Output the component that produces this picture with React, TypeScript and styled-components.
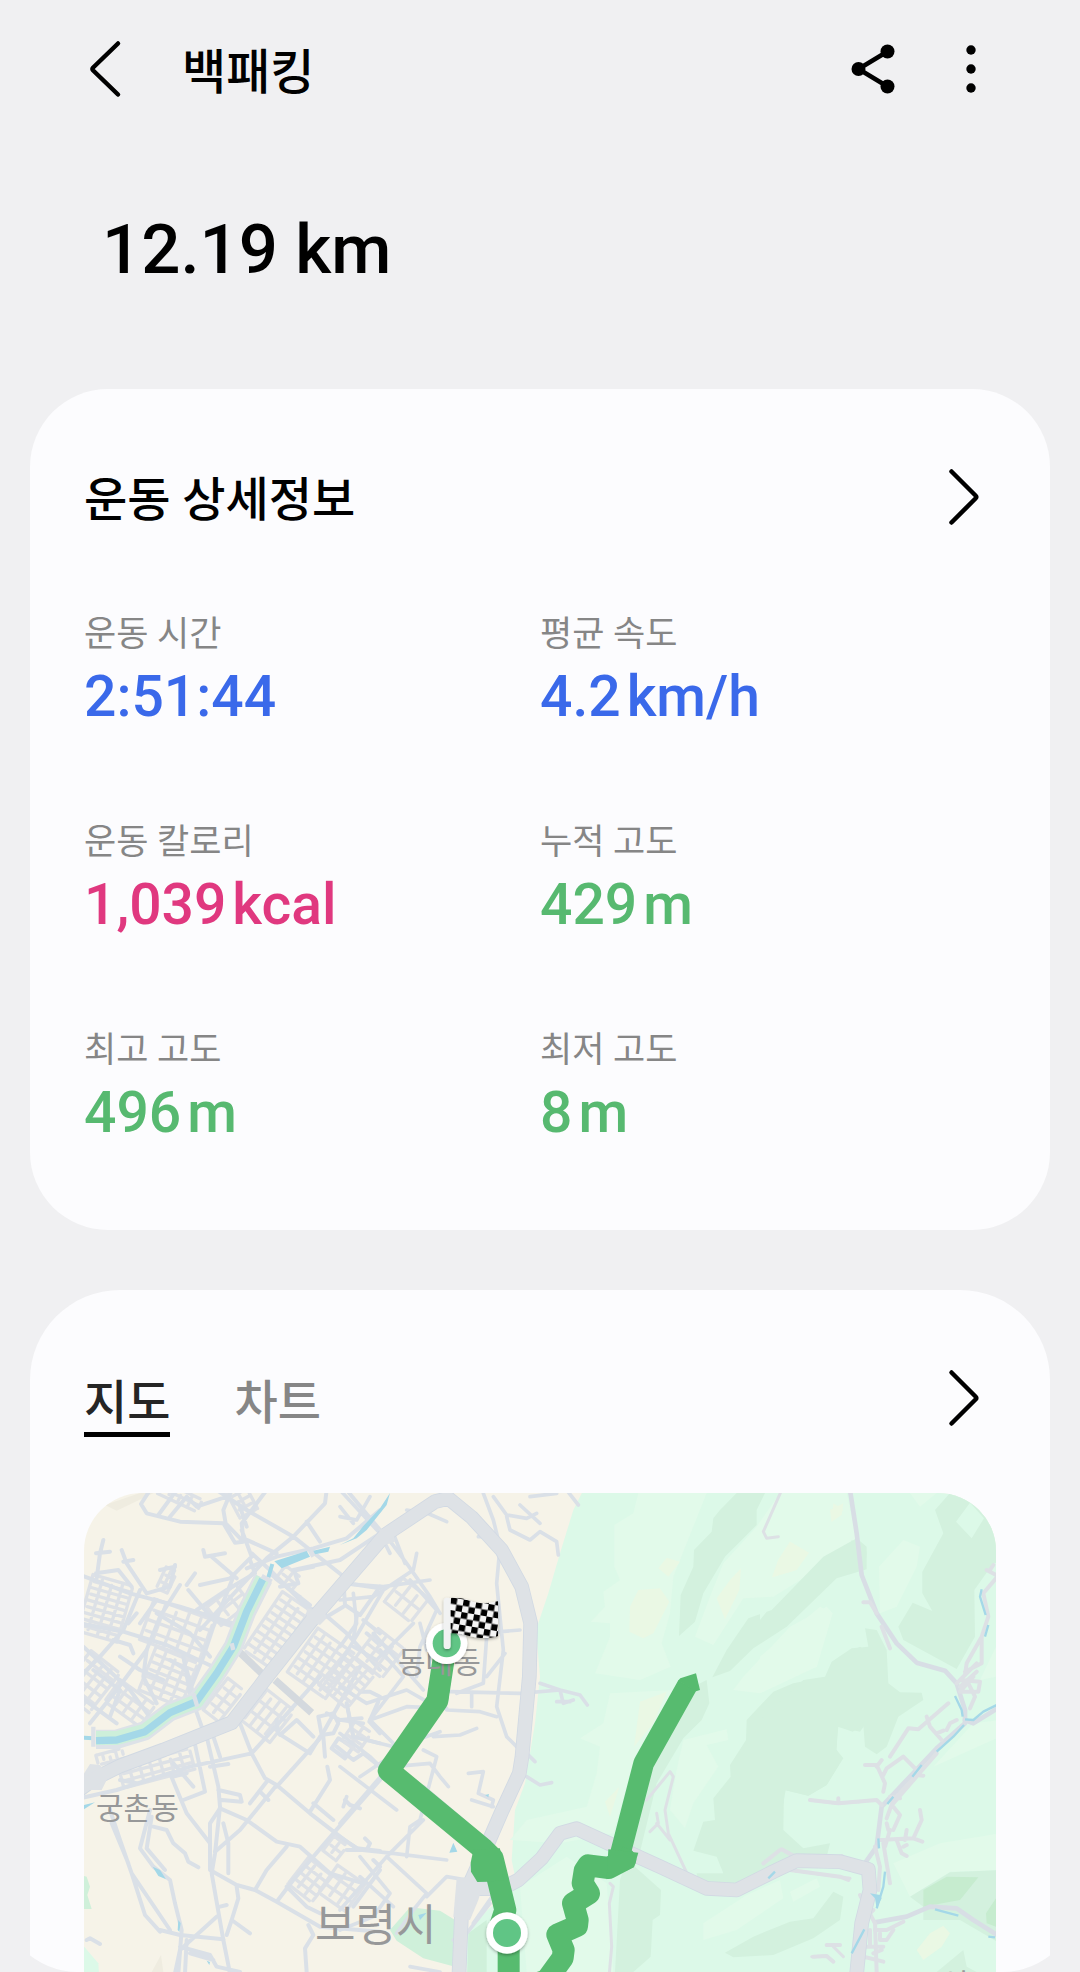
import React, { useState } from "react";
import styled, { createGlobalStyle } from "styled-components";

const GlobalStyle = createGlobalStyle`
  * { box-sizing: border-box; }
  body {
    margin: 0;
    background: #f0f0f2;
    color: #000;
    font-family: Roboto, "Noto Sans CJK KR", sans-serif;
  }
  h1, h2, p, dl, dt, dd { margin: 0; }
  button { font: inherit; }
`;

const Screen = styled.div`
  display: flex;
  flex-direction: column;
  height: 100vh;
  overflow: hidden;
  border-radius: 0 0 78px 78px;
`;

const Toolbar = styled.header`
  display: flex;
  align-items: center;
  flex: none;
  padding: 36px 84px;
`;

const IconButton = styled.button`
  display: flex;
  flex: none;
  padding: 0;
  border: 0;
  background: none;
  color: #000;
  cursor: pointer;
`;

const ScreenTitle = styled.h1`
  flex: 1;
  margin-left: 50px;
  padding-top: 8px;
  font-size: 48px;
  font-weight: 500;
  line-height: 58px;
`;

const Actions = styled.div`
  display: flex;
  gap: 48px;
`;

const Content = styled.main`
  flex: 1;
  min-height: 0;
  overflow-y: auto;
  scrollbar-width: none;
  padding: 0 30px;
`;

const Distance = styled.p`
  padding: 70px 72px 97px;
  font-size: 69px;
  font-weight: 500;
  line-height: 84px;
`;

const Card = styled.section<{ $radius: number }>`
  margin-bottom: 60px;
  padding: 78px 54px 83px;
  border-radius: ${(p) => p.$radius}px;
  background: #fcfcfe;
`;

const CardHeader = styled.div<{ $space: number }>`
  display: flex;
  align-items: flex-start;
  justify-content: space-between;
  margin-bottom: ${(p) => p.$space}px;
`;

const CardTitle = styled.h2`
  padding-top: 6px;
  font-size: 47px;
  font-weight: 500;
  line-height: 54px;
`;

const Stats = styled.dl`
  display: grid;
  grid-template-columns: 1fr 1fr;
  row-gap: 87px;
`;

const StatLabel = styled.dt`
  margin-bottom: 7px;
  padding-top: 4px;
  color: #868686;
  font-size: 35px;
  line-height: 42px;
`;

const StatValue = styled.dd<{ $color: string }>`
  display: flex;
  gap: 6px;
  color: ${(p) => p.$color};
  font-size: 57px;
  font-weight: 500;
  line-height: 68px;
`;

const Tabs = styled.div`
  display: flex;
  gap: 64px;
`;

const Tab = styled.button<{ $active: boolean }>`
  padding: 6px 0 0;
  border: 0;
  border-bottom: 5px solid ${(p) => (p.$active ? "#000" : "transparent")};
  background: none;
  color: ${(p) => (p.$active ? "#252525" : "#868686")};
  font-size: 47px;
  font-weight: 500;
  line-height: 58px;
  cursor: pointer;
`;

const MapFrame = styled.div`
  position: relative;
  height: 600px;
  overflow: hidden;
  border-radius: 58px;
  background: #f6f3e8;
`;

const MapLayer = styled.svg`
  position: absolute;
  top: 0;
  left: 0;
  width: 912px;
  min-width: 100%;
  height: 600px;
`;

const Place = styled.span<{ $x: number; $y: number; $large?: boolean }>`
  position: absolute;
  left: ${(p) => p.$x}px;
  top: ${(p) => p.$y}px;
  color: #979899;
  font-size: ${(p) => (p.$large ? 44 : 30)}px;
  line-height: ${(p) => (p.$large ? 60 : 44)}px;
  white-space: nowrap;
`;

const Chevron = ({ back = false }: { back?: boolean }) => (
  <svg width="48" height="60" viewBox="0 0 48 60" fill="none" aria-hidden="true">
    <path
      d={back ? "M34 4.5 9.2 28.5Q7.8 30 9.2 31.5L34 55.5" : "M3.5 4.5 27.500 28.500Q29 30 27.500 31.500L3.500 55.500"}
      stroke="currentColor"
      strokeWidth="4.5"
      strokeLinecap="round"
      strokeLinejoin="round"
    />
  </svg>
);

const ShareIcon = () => (
  <svg width="50" height="66" viewBox="0 0 50 66" aria-hidden="true">
    <path d="M39.500 15.500 10.500 33 39.500 50.500" fill="none" stroke="currentColor" strokeWidth="4.600" />
    <circle cx="10.500" cy="33" r="7" />
    <circle cx="39.500" cy="15.500" r="7" />
    <circle cx="39.500" cy="50.500" r="7" />
  </svg>
);

const MoreIcon = () => (
  <svg width="50" height="66" viewBox="0 0 50 66" aria-hidden="true">
    <circle cx="25" cy="14" r="4.700" />
    <circle cx="25" cy="33" r="4.700" />
    <circle cx="25" cy="52" r="4.700" />
  </svg>
);

type BlockProps = { x: number; y: number; w: number; h: number; angle: number; cols: number; rows: number; s?: number };

/* A rotated grid of side streets around the centre (x, y). */
const Blocks = ({ x, y, w, h, angle, cols, rows, s = 10 }: BlockProps) => {
  let d = "";
  for (let i = 0; i <= cols; i++) {
    const px = -w / 2 + (w * i) / cols;
    const trim = (i % 3) * 8;
    d += `M${px} ${-h / 2 + trim}V${h / 2 - ((i + 1) % 3) * 6}`;
  }
  for (let j = 0; j <= rows; j++) {
    const py = -h / 2 + (h * j) / rows;
    d += `M${-w / 2 + (j % 2) * 10} ${py}H${w / 2 - ((j + 1) % 2) * 8}`;
  }
  return <path d={d} transform={`translate(${x} ${y}) rotate(${angle})`} strokeWidth={s} />;
};

const West = "translate(-12 -9)";
const Centre = "translate(768 -9)";
const Hills = "translate(1428 -9)";
const East = "translate(2028 -9)";

const Terrain = () => (
  <g>
    <g transform={Centre}>
      <path fill="#dcf9e8" d="M730 0 700 60 660 190 625 310 588 420 600 560 585 700 555 880 525 960 515 1110 530 1185 440 1262 380 1330V1900H2100V0Z" />
      <path fill="#cff0da" d="M150 1320 210 1252 300 1262 345 1290V1430L250 1405 170 1352ZM385 1330 440 1290V1500H380Z" />
    </g>
    <g transform={West}>
      <path fill="#efece0" d="M75 45 180 9 240 0 110 62ZM215 1446 243 1395 250 1446Z" />
      <path fill="#cff0da" d="M0 1155 20 1160 30 1190 22 1215 35 1257H0Z" />
      <path fill="#dcf9e8" d="M0 1355 55 1420 60 1500H0Z" />
    </g>
    <g transform={Hills}>
      <g fill="#e2faea">
        <path d="M235 9H440L380 160 340 260 330 370 305 460 332 530 240 570 105 550 150 440 150 400 92 395 135 350 130 305 180 270 163 230V105L220 70Z" />
        <path d="M660 9H860L890 150 770 240 640 320 550 325 460 465 405 440 450 320 490 220 590 110Z" />
        <path d="M520 600 550 560 690 410 800 350 818 370 770 530 600 610Z" />
        <path d="M150 610 340 600 225 800 160 1030 0 1060-150 1050 -100 990 80 950 110 850 120 770 60 745 130 700Z" />
        <path d="M370 750 500 718 505 750 440 765 475 830 400 940 375 1015 330 960 350 840Z" />
        <path d="M430 1300 560 1215 660 1170 670 1225 530 1320 430 1350ZM690 1205 770 1165 780 1190 700 1235ZM-120 1190 20 1100 140 1180 160 1446H-100Z" />
      </g>
      <g fill="#eaf8e4">
        <path d="M235 300 300 295 328 335 280 430 250 445 208 425 210 350ZM295 235 320 203 360 215 325 260ZM510 270 543 235 538 300 495 388 470 325ZM690 155 747 188 710 240 637 262 655 210ZM240 635 320 605 280 700 222 770ZM135 935 178 890 150 980ZM820 40 850 60 815 95Z" />
      </g>
      <g fill="#d3f1de">
        <path d="M480 60 530 9H615L590 60V105L495 200 430 310 405 395 357 438 362 315 400 230 402 180 455 125 460 85Z" />
        <path d="M890 145 790 200 635 360 565 385 500 480 457 562 510 543 580 475 680 410 830 265 920 238V170Z" />
        <path d="M900 470 820 515 800 560 700 580 640 605 560 690 558 750 510 825 512 860 460 925 465 990 430 995 400 1082 470 1100 490 1150 410 1150 420 1210 600 1170 700 1100 800 1100 810 1060 730 1075 670 1020 672 900 745 917 800 885 850 805 830 780 833 710 900 725 960 640 960 520Z" />
        <path d="M440 570 448 640 425 690 370 745 290 880 240 1085 225 1130 303 1200 300 1275 278 1290 272 1400 220 1446H165L180 1170 215 1060 275 790 400 590ZM495 1388 580 1340 690 1295 760 1285 820 1205 850 1220 840 1290 760 1345 640 1395 520 1402Z" />
      </g>
    </g>
    <g transform={East}>
      <g fill="#e2faea">
        <path d="M430 150 480 170 470 230 410 350 360 370 357 230ZM0 500 180 350 217 370 170 530 0 600ZM450 9H530L480 50ZM708 470 660 570 708 560ZM640 700 720 690V740L520 830ZM400 1120 540 1060 720 1030V1140L570 1145 450 1220Z" />
      </g>
      <g fill="#d3f1de">
        <path d="M570 9 525 60 550 130 487 245V310L517 363 458 338 415 410 430 450 590 537 645 440 643 300 700 220 720 215V0Z" />
        <path d="M275 150 320 185 315 240 260 240ZM315 415 350 420 380 480 385 580 420 607 485 608 490 630 415 680 380 770 350 793 315 770 310 705 278 725 235 710 228 780 248 805 200 885 145 917 77 900 60 1000 0 1040V690L130 570 195 560 215 515 275 475 325 470ZM450 1220 570 1147 720 1140V1360L600 1290H490V1250ZM530 1446 610 1380 620 1430 650 1446Z" />
      </g>
      <path fill="#c6eccf" d="M490 1200 560 1160 655 1162 600 1230 490 1250ZM678 1270 708 1225V1310L680 1300Z" />
      <path fill="#dcf9e8" d="M588 95 630 38 672 85 635 145ZM0 370 20 365 0 390Z" />
      <path fill="#eaf8e4" d="M90 155 145 188 108 240 36 262 55 210ZM510 1330 550 1307 570 1330 545 1370 490 1410 470 1380ZM210 60 250 40 245 75 215 95Z" />
    </g>
  </g>
);

const Streets = () => (
  <g fill="none" stroke="#dae0e7" strokeLinecap="round" strokeLinejoin="round">
    <g transform={West}>
      <g stroke="#dde1e6">
        <Blocks x={75} y={355} w={125} h={175} angle={16} cols={4} rows={9} />
        <Blocks x={30} y={575} w={110} h={150} angle={38} cols={4} rows={5} />
        <Blocks x={290} y={420} w={190} h={130} angle={20} cols={5} rows={4} />
        <Blocks x={265} y={560} w={135} h={140} angle={22} cols={4} rows={6} />
        <Blocks x={150} y={640} w={130} h={80} angle={36} cols={4} rows={3} />
        <Blocks x={590} y={420} w={100} h={210} angle={34} cols={3} rows={9} />
        <Blocks x={725} y={520} w={140} h={160} angle={35} cols={5} rows={6} />
        <Blocks x={555} y={670} w={130} h={120} angle={38} cols={5} rows={3} />
        <Blocks x={430} y={630} w={60} h={120} angle={38} cols={2} rows={4} />
        <Blocks x={230} y={835} w={220} h={64} angle={-15} cols={7} rows={3} />
        <Blocks x={90} y={800} w={80} h={30} angle={-15} cols={4} rows={1} />
        <Blocks x={690} y={1170} w={90} h={100} angle={38} cols={3} rows={4} />
        <Blocks x={785} y={1195} w={100} h={100} angle={35} cols={3} rows={3} />
        <Blocks x={765} y={1075} w={50} h={55} angle={38} cols={2} rows={2} />
        <Blocks x={260} y={270} w={36} h={70} angle={25} cols={2} rows={3} />
        <Blocks x={445} y={345} w={110} h={70} angle={-38} cols={3} rows={2} />
        <Blocks x={625} y={265} w={60} h={50} angle={38} cols={2} rows={2} />
        <Blocks x={485} y={30} w={60} h={90} angle={-28} cols={2} rows={4} />
        <Blocks x={300} y={20} w={130} h={40} angle={25} cols={4} rows={2} />
      </g>
      <g strokeWidth="12">
        <path d="M210 0 183 42 200 70 300 95 430 100 465 158 490 155 437 100 430 60 455 0M235 75 290 0M270 80 320 20 350 50 440 20M410 0 500 60 640 140 785 255M560 0 485 100 490 145 590 190M740 0 735 40 640 140 560 205 360 420M480 50 500 110M680 95 720 155M800 0 900 120M485 120 515 200 450 265 360 285M515 190 570 240 690 360" />
        <path d="M0 255 150 310 300 350 460 400M0 400 130 425 260 465 420 540M10 470 150 600 230 710M300 285 240 380 200 480 110 600 30 700M180 300 130 420 60 500 0 560M230 370 330 430 390 500M50 265 60 190 70 150M48 190 90 185M48 250 115 240 155 290M125 180 140 220 200 310M130 215 160 210M240 240 285 230M285 225 270 290 200 310M325 300 400 390 460 410M345 250 320 285M370 180 375 200 435 190M395 200 470 265M460 260 400 410 370 500 330 600M510 210 525 250 440 300 350 360" />
        <path d="M310 500 330 610 365 710M100 450 150 465 160 490M270 510 320 540 345 630M120 500 180 540 250 570M200 480 190 560 230 640M0 620 110 700M40 540 120 600 90 680M170 370 145 400M230 330 180 400" />
        <path d="M480 700 515 790 555 865 590 885 690 970 800 1055 830 1075 900 1083M515 790 330 830 110 900 0 925M515 790 560 740 640 650 720 560M590 890 720 745 840 530M340 740 375 905 310 930M380 740 415 890 420 950 405 1090 395 1150 430 1350 450 1450M400 740 420 800M270 850 320 970 390 1060M390 830 445 822M415 900 480 915 485 935 425 930M510 940 560 875M540 905 565 930M280 820 340 890M120 870 170 880M320 850 280 860" />
        <path d="M420 955 500 990 590 1055 660 1070 750 1150 850 1180M420 955 390 1000V1140L470 1185 525 1200 590 1235 720 1310 900 1325M590 885 480 1020 405 1085M430 1000 445 1060V1150M620 1070 560 1140 525 1200M590 1235 640 1170 760 1030 900 870M690 965 750 870 742 830M700 940 760 990M620 1190 680 1250 720 1270M820 1250 900 1140M470 1190 475 1225 455 1290 510 1330M455 1290 440 1335M420 1250 440 1245M410 1280 300 1380 285 1450M240 1320 300 1335 430 1348M795 930 810 945 840 955M855 1045 870 1060 860 1080 800 1080M880 1110 900 1130" />
        <path d="M90 960 120 1050 155 1150 195 1275 240 1325M155 1150 270 1320M95 1000 145 1120M210 960 180 1075 220 1130 270 1170 285 1240 305 1320 295 1450M215 980 200 1075 255 1140M220 1010 260 1020 280 1060 315 1090 325 1115 355 1132M300 1370 390 1395 410 1430 480 1446M320 1350 315 1450M330 1390 400 1410M20 1350 30 1345 60 1362M685 1305 700 1335 675 1375 680 1446M730 740 735 800M740 670 780 690 845 685M800 640 820 740 900 760M840 605 870 605 900 620M895 635 868 695 900 730M715 680 760 670 775 700 760 730 725 735ZM770 770 820 810 850 790 900 830M775 745 755 775 795 805 820 770ZM590 690 595 730 690 790 720 740M600 735 650 690 700 740" />
        <path d="M500 235 590 200 700 175 800 145 900 60M640 240 780 210 900 130M575 255 690 345M645 250 655 280 600 290M730 370 800 430 900 540M790 270 795 345 840 375 900 290M800 280 900 295M740 380 790 350M830 380 820 450M850 390 900 430M860 430 900 465M660 320 665 340 700 360M700 230 650 240" />
      </g>
      <path stroke="#d4d9de" strokeWidth="22" strokeLinecap="butt" d="M470 478 545 550M585 570 695 668" />
    </g>
    <g transform={Centre}>
      <g stroke="#dde1e6">
        <Blocks x={20} y={570} w={110} h={130} angle={40} cols={4} rows={6} />
        <Blocks x={120} y={490} w={100} h={110} angle={38} cols={3} rows={4} />
        <Blocks x={50} y={740} w={60} h={70} angle={35} cols={2} rows={3} />
        <Blocks x={200} y={330} w={100} h={90} angle={38} cols={3} rows={2} />
      </g>
      <g strokeWidth="11">
        <path d="M140 140 200 220 270 320 300 370M160 130 195 220M130 150 150 190M0 280 130 290 270 270M0 330 100 320 220 240 230 190M40 310 50 400 0 470M130 300 60 420 0 520M100 430 250 600M210 270 290 360 240 470 230 560M220 400 110 510 40 470M190 560 90 690 180 780 60 860M0 590 80 640 200 600 270 640M0 690 70 700M20 640 40 740 200 780M0 730 90 800 170 880M120 480 190 560M240 400 260 480" />
        <path d="M430 10 460 90 480 170 470 280 490 480 470 650 500 740 535 775M460 20 500 75 560 85 590 70M500 80 510 120 570 150 600 125 650 155 655 195M540 45 600 100M620 0 680 0 715 45M570 20 650 10M415 140 440 140M240 60 320 95M200 60 260 70M420 430 540 420M440 440 430 580 350 610M495 490 440 560M330 605 540 610 660 600 720 615 742 645M600 580 660 600 670 640 700 630M650 635H690M395 610V650M320 660 420 665 470 680M560 790 585 815M560 860 600 885 635 878M280 740 360 735 410 715M230 750 300 725M90 690 200 650 320 655" />
        <path d="M250 780 290 800 240 990 210 1010 200 1100M160 830 270 820 300 860 325 890M385 850 430 845 415 910 460 930 455 950M395 930 460 950M0 830 170 960M250 890 380 1000M0 1000 130 850M0 1040 60 1080 160 1090 320 1110M0 1260 140 1100 250 990M0 1320 100 1280 150 1210 60 1100M140 1100 260 1210 220 1260 170 1330M60 1160 160 1250M260 1220 320 1160 380 1170M400 1300 470 1200M380 1330 450 1240M210 1430 300 1446M340 1350 360 1370M10 950 20 920M0 80 50 90 90 20M0 0 120 130M40 100 0 50" />
      </g>
    </g>
    <g stroke="#dde1e5">
      <g transform={Hills} strokeWidth="9">
        <path d="M665 0 610 125 620 145 655 140M260 930 330 845 340 860 315 960 325 1030 390 1170M290 970 295 1000 270 1025M290 1000 330 1050M150 1180 160 1190 148 1240 155 1370 148 1450M750 930 830 940 900 935M665 1078 710 1100 850 1110M690 1140 760 1150 870 1165M800 1365H840M755 1400 800 1398 820 1415M820 1370 850 1400" />
      </g>
      <g transform={East} strokeWidth="12">
        <path strokeWidth="14" d="M270 0 290 130 305 255 350 370 410 460 470 518 555 542 590 580 615 660V700L530 775 365 950 350 1070 300 1140" stroke="#d8dee5" />
        <path stroke="#d8dee5" strokeWidth="14" d="M615 690 640 700 720 650M345 1297 440 1280 510 1250 590 1255 640 1290 720 1340" />
        <path d="M310 337H330L350 370M365 410 390 475M345 1070 360 1130 355 1200M370 1060 390 1180M300 1215 345 1300 350 1446M375 1070 390 1020M355 1050 460 1045 487 1055M440 1020 435 1050M460 1045 485 990 480 960M410 1050 425 1090 440 1098M430 1070 440 1065M150 930 235 940 350 930 365 945M235 925V940M315 825 350 825 375 880 370 905M365 810 350 830M370 855 380 835 430 800 470 840M390 800 445 715 475 718 565 640M500 680 510 710 545 750M530 730 550 722M560 720 570 700 590 690M490 857 470 855 400 930 380 985M420 925 390 920M400 950 420 975 400 1020M530 790 400 940M380 1000 385 1020" />
        <path d="M708 265 670 310 685 380 665 440 620 520 615 555 590 580M680 240 708 255M700 225 690 240M665 440V520L615 545M650 520 600 570 660 575 655 605 600 605 640 560M620 570 645 620 630 655M600 590 650 545M300 1300 340 1260M305 1260 310 1290M200 1365H240M160 1400 200 1398 220 1415M290 1395 370 1415M330 1320V1370M320 1370H370M345 1320H380L430 1295M360 1330V1350H380L400 1320M340 1390 365 1380" />
        <path d="M90 1140 240 1160 265 1170M65 1078 100 1098M245 1098 290 1140M10 1120 60 1080" />
      </g>
    </g>
  </g>
);

const highways = (
  <>
    <path d="M-10 905 45 865 120 828 250 780 455 698 560 562 700 385 915 135 1065 35 1105 25 1175 82 1265 180 1325 290 1352 400 1348 560 1326 800 1318 850 1265 965 1215 1080 1165 1190 1145 1260 1135 1500" />
    <path d="M1140 1196H1265L1315 1170 1385 1105 1440 1030 1490 1016 1590 1062 1740 1130 1880 1195 1970 1200 2080 1145 2150 1112 2280 1115 2365 1138 2370 1200 2345 1300 2325 1500" />
  </>
);

const Highways = () => (
  <g transform={West} fill="none" strokeLinejoin="round">
    <g stroke="#d1d9e3" strokeWidth="44">{highways}</g>
    <path d="M0 870 30 822 60 825 85 860 65 900H0ZM680 355 735 365 740 385 720 405 680 390ZM895 115 940 130 945 155 915 165Z" fill="#dee2e6" />
    <path d="M1130 1165 1180 1160 1210 1180 1195 1230 1170 1290 1120 1280Z" fill="#dee2e6" />
    <g stroke="#dee2e6" strokeWidth="39">{highways}</g>
  </g>
);

const Water = () => (
  <g fill="none" strokeLinejoin="round">
    <g transform={West}>
      <path d="M550 265 500 365 460 470 410 550 350 634 270 665 195 722 110 748 48 748" stroke="#dde2e8" strokeWidth="58" />
      <path d="M548 265 500 365 460 470 410 550 350 634 270 665 195 722 110 744 48 744" stroke="#cdefda" strokeWidth="42" />
      <path d="M548 268 500 365 460 470 410 550 350 634 270 668 195 725 110 750 48 752" stroke="#a4d8e8" strokeWidth="22" />
      <path d="M0 742 40 745M565 262 577 222" stroke="#a4d8e8" strokeWidth="12" />
      <path d="M583 214 680 183 690 200 605 235ZM700 182 750 170 745 185 705 193ZM780 165 820 145 850 108 900 55 930 9 920 45 860 120 830 145Z" fill="#a4d8e8" />
      <path d="M340 610 352 650M455 460 460 480M545 258 575 275M40 710V770M690 182 700 200" stroke="#dce1e7" strokeWidth="13" />
      <path d="M218 1130 240 1140 258 1168 235 1158ZM295 1290 302 1300 298 1325 293 1320ZM12 945 45 937 12 958ZM380 1412 390 1416 388 1425Z" fill="#a4d8e8" />
    </g>
    <g transform={Centre} fill="#a4d8e8">
      <path d="M340 1058 352 1085 328 1088ZM235 1275 260 1268 240 1290ZM435 915 447 912 445 922Z" />
    </g>
    <g transform={East} stroke="#a4d8e8" strokeWidth="7">
      <path d="M665 298 660 320 677 375M685 405 675 440M585 618 605 660 608 680M615 688 640 690 670 665 710 645M612 705 580 740 530 785M485 825 457 860M400 920 382 942M355 1045 357 1075M375 1145 370 1190 350 1255M525 1258 595 1277M685 1340 705 1342M313 1318 275 1390M25 1165 45 1145" />
      <path d="M330 1210 360 1215 365 1225 350 1255 345 1225Z" fill="#a4d8e8" stroke="none" />
    </g>
  </g>
);

const Route = () => (
  <g transform={Centre} fill="none" stroke="#57bb6f" strokeLinejoin="round">
    <path strokeWidth="60" d="M314 480 294 632" />
    <path strokeWidth="66" d="M312 500 292 632 146 842 430 1077 458 1105 496 1260 478 1315 506 1380 506 1800" />
    <path fill="#57bb6f" stroke="none" d="M400 1080 480 1075 490 1170 445 1175 412 1176 393 1145 392 1118Z" />
    <path strokeWidth="62" strokeLinejoin="bevel" d="M1042 586 911 820 836 1110" />
    <path fill="#57bb6f" stroke="none" d="M1014 572 1021 565 1068 550 1080 600 1068 604Z" />
    <path strokeWidth="66" d="M836 1100 856 1108 806 1134 745 1126 734 1142 728 1180 747 1210 699 1240 713 1290 711 1308 652 1334 671 1380 668 1404 620 1470 540 1500 506 1540" />
    <path fill="#57bb6f" stroke="none" d="M805 1078 895 1088 882 1132 800 1168Z" />
  </g>
);

const Markers = () => (
  <g transform={Centre}>
    <defs>
      <pattern id="checks" width="38" height="38" patternUnits="userSpaceOnUse" patternTransform="translate(334 322) rotate(10)">
        <path fill="#f4f4f4" d="M0 0H38V38H0Z" />
        <path fill="#000" d="M0 0H19V19H0ZM19 19H38V38H19Z" />
      </pattern>
      <filter id="soft" x="-20%" y="-20%" width="140%" height="150%">
        <feDropShadow dx="0" dy="4" stdDeviation="5" floodColor="#000" floodOpacity="0.35" />
      </filter>
    </defs>
    {[[320, 460], [501, 1329]].map(([x, y]) => (
      <g key={y} filter="url(#soft)">
        <circle cx={x} cy={y} r="62" fill="#fff" />
        <circle cx={x} cy={y} r="42" fill="#60c585" />
      </g>
    ))}
    <g filter="url(#soft)">
      <path d="M328 325C370 318 390 338 425 340 445 340 455 337 474 334V438C445 448 415 445 385 437 365 430 345 430 328 430Z" fill="url(#checks)" />
      <rect x="311" y="323" width="21" height="154" rx="10" fill="#f1f2f2" />
    </g>
  </g>
);

const RouteMap = () => (
  <MapFrame>
    <MapLayer viewBox="0 0 2736 1800" preserveAspectRatio="xMinYMin slice" role="img" aria-label="이동 경로">
      <Terrain />
      <Streets />
      <Highways />
      <Water />
      <Route />
    </MapLayer>
    <Place $x={12} $y={294}>궁촌동</Place>
    <Place $x={314} $y={148}>동대동</Place>
    <Place $x={231} $y={403} $large>보령시</Place>
    <Place $x={857} $y={470}>성주</Place>
    <MapLayer viewBox="0 0 2736 1800" preserveAspectRatio="xMinYMin slice" aria-hidden="true">
      <Markers />
    </MapLayer>
  </MapFrame>
);

const BLUE = "#3a69ea";
const PINK = "#e0387f";
const GREEN = "#57b970";

const stats = [
  { label: "운동 시간", value: "2:51:44", unit: "", color: BLUE },
  { label: "평균 속도", value: "4.2", unit: "km/h", color: BLUE },
  { label: "운동 칼로리", value: "1,039", unit: "kcal", color: PINK },
  { label: "누적 고도", value: "429", unit: "m", color: GREEN },
  { label: "최고 고도", value: "496", unit: "m", color: GREEN },
  { label: "최저 고도", value: "8", unit: "m", color: GREEN },
];

const tabs = ["지도", "차트"];

export default function App() {
  const [tab, setTab] = useState(tabs[0]);
  return (
    <>
      <GlobalStyle />
      <Screen>
        <Toolbar>
          <IconButton type="button" aria-label="뒤로">
            <Chevron back />
          </IconButton>
          <ScreenTitle>백패킹</ScreenTitle>
          <Actions>
            <IconButton type="button" aria-label="공유">
              <ShareIcon />
            </IconButton>
            <IconButton type="button" aria-label="더보기">
              <MoreIcon />
            </IconButton>
          </Actions>
        </Toolbar>
        <Content>
          <Distance>12.19 km</Distance>
          <Card $radius={78}>
            <CardHeader $space={83}>
              <CardTitle>운동 상세정보</CardTitle>
              <IconButton type="button" aria-label="운동 상세정보 보기">
                <Chevron />
              </IconButton>
            </CardHeader>
            <Stats>
              {stats.map((s) => (
                <div key={s.label}>
                  <StatLabel>{s.label}</StatLabel>
                  <StatValue $color={s.color}>
                    <span>{s.value}</span>
                    {s.unit && <span>{s.unit}</span>}
                  </StatValue>
                </div>
              ))}
            </Stats>
          </Card>
          <Card $radius={90}>
            <CardHeader $space={56}>
              <Tabs role="tablist">
                {tabs.map((name) => (
                  <Tab
                    key={name}
                    type="button"
                    role="tab"
                    aria-selected={tab === name}
                    $active={tab === name}
                    onClick={() => setTab(name)}
                  >
                    {name}
                  </Tab>
                ))}
              </Tabs>
              <IconButton type="button" aria-label="지도 크게 보기">
                <Chevron />
              </IconButton>
            </CardHeader>
            <RouteMap />
          </Card>
        </Content>
      </Screen>
    </>
  );
}
